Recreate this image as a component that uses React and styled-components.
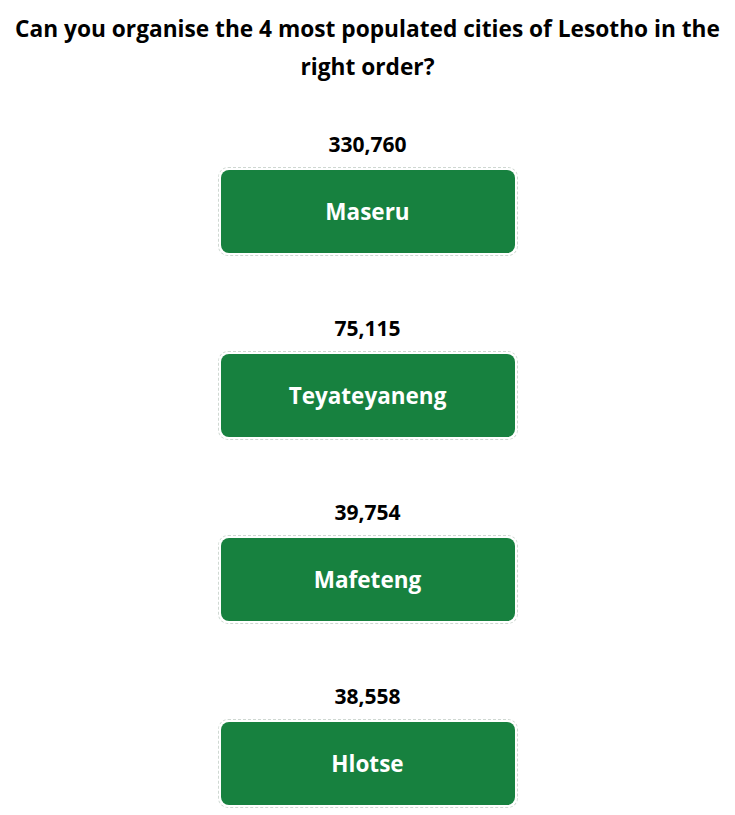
import React from "react";
import styled, { createGlobalStyle } from "styled-components";

const GlobalStyle = createGlobalStyle`
  body {
    margin: 0;
    background: #ffffff;
    font-family: "Open Sans", "Noto Sans", sans-serif;
    color: #000000;
  }
`;

const Page = styled.div`
  display: flex;
  flex-direction: column;
  align-items: center;
  padding: 10px 8px 0;
`;

const Title = styled.h2`
  margin: 0 0 46px;
  font-size: 22.7px;
  font-weight: 700;
  line-height: 38px;
  text-align: center;
`;

const List = styled.div`
  display: flex;
  flex-direction: column;
  align-items: center;
  gap: 60px;
`;

const Item = styled.div`
  display: flex;
  flex-direction: column;
  align-items: center;
  gap: 11px;
`;

const Population = styled.div`
  font-size: 21px;
  font-weight: 700;
  line-height: 24px;
`;

const Slot = styled.div`
  width: 300px;
  height: 89px;
  box-sizing: border-box;
  padding: 2px;
  border: 1px dashed #cfd8d2;
  border-radius: 10px;
  display: flex;
`;

const CityButton = styled.div`
  flex: 1;
  border-radius: 8px;
  background: #17813f;
  color: #ffffff;
  display: flex;
  align-items: center;
  justify-content: center;
  font-size: 22.5px;
  font-weight: 700;
`;

const cities = [
  { name: "Maseru", population: "330,760" },
  { name: "Teyateyaneng", population: "75,115" },
  { name: "Mafeteng", population: "39,754" },
  { name: "Hlotse", population: "38,558" },
];

export default function App() {
  return (
    <>
      <GlobalStyle />
      <Page>
        <Title>
          Can you organise the 4 most populated cities of Lesotho in the
          right order?
        </Title>
        <List>
          {cities.map((city) => (
            <Item key={city.name}>
              <Population>{city.population}</Population>
              <Slot>
                <CityButton>{city.name}</CityButton>
              </Slot>
            </Item>
          ))}
        </List>
      </Page>
    </>
  );
}
